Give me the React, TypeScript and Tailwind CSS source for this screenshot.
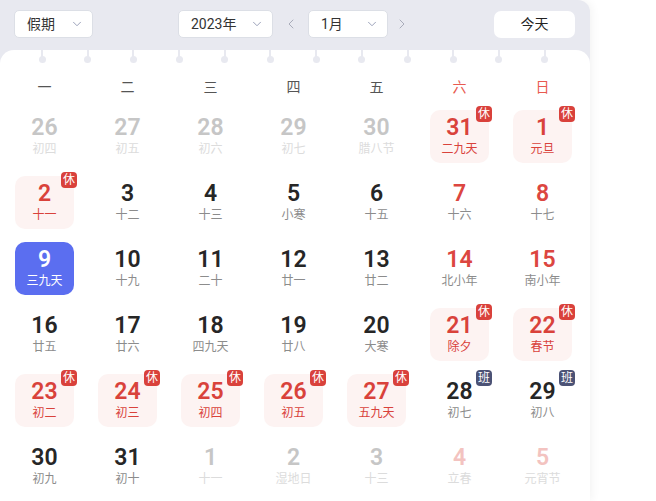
import { ChevronDown, ChevronLeft, ChevronRight } from 'lucide-react';

type Day = {
  d: number;
  lunar: string;
  faded?: boolean;
  weekend?: boolean;
  tag?: 'rest' | 'work';
  selected?: boolean;
};

const rows: Day[][] = [
  [
    { d: 26, lunar: '初四', faded: true },
    { d: 27, lunar: '初五', faded: true },
    { d: 28, lunar: '初六', faded: true },
    { d: 29, lunar: '初七', faded: true },
    { d: 30, lunar: '腊八节', faded: true },
    { d: 31, lunar: '二九天', weekend: true, tag: 'rest' },
    { d: 1, lunar: '元旦', weekend: true, tag: 'rest' },
  ],
  [
    { d: 2, lunar: '十一', tag: 'rest' },
    { d: 3, lunar: '十二' },
    { d: 4, lunar: '十三' },
    { d: 5, lunar: '小寒' },
    { d: 6, lunar: '十五' },
    { d: 7, lunar: '十六', weekend: true },
    { d: 8, lunar: '十七', weekend: true },
  ],
  [
    { d: 9, lunar: '三九天', selected: true },
    { d: 10, lunar: '十九' },
    { d: 11, lunar: '二十' },
    { d: 12, lunar: '廿一' },
    { d: 13, lunar: '廿二' },
    { d: 14, lunar: '北小年', weekend: true },
    { d: 15, lunar: '南小年', weekend: true },
  ],
  [
    { d: 16, lunar: '廿五' },
    { d: 17, lunar: '廿六' },
    { d: 18, lunar: '四九天' },
    { d: 19, lunar: '廿八' },
    { d: 20, lunar: '大寒' },
    { d: 21, lunar: '除夕', weekend: true, tag: 'rest' },
    { d: 22, lunar: '春节', weekend: true, tag: 'rest' },
  ],
  [
    { d: 23, lunar: '初二', tag: 'rest' },
    { d: 24, lunar: '初三', tag: 'rest' },
    { d: 25, lunar: '初四', tag: 'rest' },
    { d: 26, lunar: '初五', tag: 'rest' },
    { d: 27, lunar: '五九天', tag: 'rest' },
    { d: 28, lunar: '初七', weekend: true, tag: 'work' },
    { d: 29, lunar: '初八', weekend: true, tag: 'work' },
  ],
  [
    { d: 30, lunar: '初九' },
    { d: 31, lunar: '初十' },
    { d: 1, lunar: '十一', faded: true },
    { d: 2, lunar: '湿地日', faded: true },
    { d: 3, lunar: '十三', faded: true },
    { d: 4, lunar: '立春', faded: true, weekend: true },
    { d: 5, lunar: '元宵节', faded: true, weekend: true },
  ],
];

const weekdays = ['一', '二', '三', '四', '五', '六', '日'];

function DayCell({ day }: { day: Day }) {
  const isRest = day.tag === 'rest';
  const isWork = day.tag === 'work';

  let box = '';
  let num = 'text-[#262626]';
  let lunar = 'text-[#8c8c8c]';

  if (day.selected) {
    box = 'bg-[#5b6ef0]';
    num = 'text-white';
    lunar = 'text-white';
  } else if (isRest) {
    box = 'bg-[#fdf3f2]';
    num = 'text-[#d9423b]';
    lunar = 'text-[#d9423b]';
  } else if (day.faded) {
    num = day.weekend ? 'text-[#f3c3c0]' : 'text-[#c6c6c6]';
    lunar = 'text-[#dcdcdc]';
  } else if (day.weekend && !isWork) {
    num = 'text-[#dc4640]';
  }

  return (
    <div className="flex justify-center">
      <div className={`relative w-[59px] h-[53px] rounded-[10px] flex flex-col items-center pt-[6px] ${box}`}>
        <span className={`text-[23px] leading-[24px] font-semibold font-['Roboto',sans-serif] ${num}`}>
          {day.d}
        </span>
        <span className={`mt-[1px] text-[12px] leading-[16px] ${lunar}`}>{day.lunar}</span>
        {day.tag && (
          <span
            className={`absolute -top-[4px] -right-[3px] w-[16px] h-[16px] rounded-[4px] flex items-center justify-center text-[12px] leading-none text-white ${
              isRest ? 'bg-[#d9413b]' : 'bg-[#4b5275]'
            }`}
          >
            {isRest ? '休' : '班'}
          </span>
        )}
      </div>
    </div>
  );
}

function Select({ label, width }: { label: string; width: string }) {
  return (
    <div
      className={`${width} h-[28px] bg-white border border-[#dcdfe6] rounded-[5px] flex items-center justify-between pl-[12px] pr-[8px] text-[14px] text-[#333]`}
    >
      <span>{label}</span>
      <ChevronDown size={14} strokeWidth={1.5} className="text-[#8e95b0]" />
    </div>
  );
}

export default function App() {
  return (
    <div className="min-h-screen bg-white font-['Roboto','Noto_Sans_CJK_SC',sans-serif]">
      <div className="w-[590px] bg-[#e8e9f0] rounded-tr-[12px] shadow-[2px_0_10px_rgba(0,0,0,0.05)]">
        {/* Toolbar */}
        <div className="h-[50px] flex items-center pl-[14px] pr-[15px] pb-[2px]">
          <Select label="假期" width="w-[79px]" />
          <div className="ml-[85px]">
            <Select label="2023年" width="w-[95px]" />
          </div>
          <div className="w-[35px] flex justify-center text-[#a9acba]">
            <ChevronLeft size={16} strokeWidth={1.5} />
          </div>
          <Select label="1月" width="w-[80px]" />
          <div className="w-[28px] flex justify-center text-[#a9acba]">
            <ChevronRight size={16} strokeWidth={1.5} />
          </div>
          <button className="ml-auto w-[81px] h-[27px] bg-white rounded-[7px] text-[14px] text-[#222]">
            今天
          </button>
        </div>

        {/* Body */}
        <div className="relative bg-white rounded-t-[14px] pl-[3px] pr-[6px] pb-[8px]">
          {/* binder pins */}
          <div className="absolute top-0 left-[39px] flex gap-[39.7px]">
            {Array.from({ length: 12 }).map((_, i) => (
              <div key={i} className="w-[6px] flex flex-col items-center">
                <div className="w-[2px] h-[7px] bg-[#e8e9f0]" />
                <div className="w-[7px] h-[7px] -mt-[1px] rounded-full bg-[#e8e9f0]" />
              </div>
            ))}
          </div>

          <div className="grid grid-cols-7 pt-[27px]">
            {weekdays.map((w, i) => (
              <div
                key={w}
                className={`text-center text-[14px] leading-[20px] ${i >= 5 ? 'text-[#e85a50]' : 'text-[#555]'}`}
              >
                {w}
              </div>
            ))}
          </div>

          <div className="mt-[13px] flex flex-col gap-[13px]">
            {rows.map((row, r) => (
              <div key={r} className="grid grid-cols-7">
                {row.map((day, c) => (
                  <DayCell key={c} day={day} />
                ))}
              </div>
            ))}
          </div>
        </div>
      </div>
    </div>
  );
}
